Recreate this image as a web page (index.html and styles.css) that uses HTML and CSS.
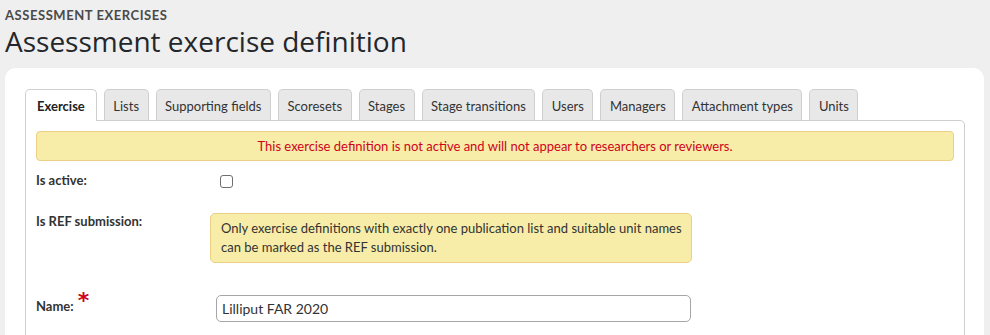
FILE: index.html
```html
<!DOCTYPE html>
<html>
<head>
<meta charset="utf-8">
<link rel="stylesheet" href="styles.css">
</head>
<body>
<div class="page">
  <div class="crumb">ASSESSMENT EXERCISES</div>
  <h1 class="title">Assessment exercise definition</h1>
  <div class="card">
    <ul class="tabs">
      <li class="tab active">Exercise</li>
      <li class="tab">Lists</li>
      <li class="tab">Supporting fields</li>
      <li class="tab">Scoresets</li>
      <li class="tab">Stages</li>
      <li class="tab">Stage transitions</li>
      <li class="tab">Users</li>
      <li class="tab">Managers</li>
      <li class="tab">Attachment types</li>
      <li class="tab">Units</li>
    </ul>
    <div class="panel">
      <div class="alert">This exercise definition is not active and will not appear to researchers or reviewers.</div>
      <div class="row row-active">
        <label class="label">Is active:</label>
        <div class="field"><span class="checkbox"></span></div>
      </div>
      <div class="row row-ref">
        <label class="label">Is REF submission:</label>
        <div class="field"><div class="note">Only exercise definitions with exactly one publication list and suitable unit names can be marked as the REF submission.</div></div>
      </div>
      <div class="row row-name">
        <label class="label">Name:<span class="req">*</span></label>
        <div class="field"><div class="input">Lilliput FAR 2020</div></div>
      </div>
    </div>
  </div>
</div>
</body>
</html>
```
FILE: styles.css
```css
html, body {
  margin: 0;
  padding: 0;
  background: #efefef;
}
body {
  font-family: Lato, "Open Sans", sans-serif;
  color: #333;
  height: 335px;
  overflow: hidden;
}
.page {
  padding: 7px 6px 0 5px;
}
.crumb {
  font-size: 13px;
  font-weight: 700;
  color: #4a4a4a;
  letter-spacing: 0.55px;
  line-height: 16px;
}
.title {
  margin: -1px 0 0 0;
  font-family: "Open Sans", Lato, sans-serif;
  font-weight: 500;
  font-size: 28px;
  line-height: 38px;
  color: #23272b;
}
.card {
  margin-top: 8px;
  background: #fff;
  border-radius: 11px;
  padding: 21px 20px 20px 20px;
  height: 300px;
}
.tabs {
  display: flex;
  list-style: none;
  margin: 0;
  padding: 0;
  gap: 7px;
  position: relative;
  z-index: 1;
}
.tab {
  font-size: 13px;
  height: 31px;
  line-height: 32px;
  padding: 0 8.5px;
  background: #e8e8e8;
  border: 1px solid #cfcfcf;
  border-bottom: none;
  border-radius: 5px 5px 0 0;
  color: #333;
  box-sizing: border-box;
}
.tab.active {
  background: #fff;
  font-weight: 700;
  color: #222;
  height: 32px;
  padding: 0 11px;
}
.panel {
  box-sizing: border-box;
  margin-top: -1px;
  border: 1px solid #cfcfcf;
  border-radius: 0 5px 0 0;
  padding: 10px 10px 0 10px;
  width: 940px;
  height: 230px;
}
.alert {
  background: #f7eda8;
  border: 1px solid #ebd085;
  border-radius: 4px;
  color: #d0021b;
  font-size: 13px;
  text-align: center;
  height: 28px;
  line-height: 29px;
}
.row {
  display: flex;
  font-size: 13px;
}
.label {
  width: 174px;
  font-weight: 700;
  color: #333;
}
.row-active {
  margin-top: 9px;
  height: 20px;
  line-height: 20px;
}
.checkbox {
  display: block;
  width: 11px;
  height: 11px;
  border: 1px solid #6e6e6e;
  border-radius: 3px;
  margin: 5px 0 0 10px;
}
.row-ref {
  margin-top: 23px;
}
.note {
  width: 465px;
  background: #f7eda8;
  border: 1px solid #ebd085;
  border-radius: 5px;
  padding: 5px 5px 5px 10px;
  font-size: 13px;
  line-height: 19px;
  color: #333;
}
.row-name {
  margin-top: 32px;
}
.row-name .label {
  padding-top: 3px;
  line-height: 16px;
}
.req {
  color: #d0021b;
  font-family: "DejaVu Sans", sans-serif;
  font-size: 22px;
  font-weight: 700;
  display: inline-block;
  vertical-align: top;
  line-height: 20px;
  margin: -7px 0 0 4px;
}
.row-name .field {
  padding-left: 6px;
}
.input {
  width: 463px;
  height: 25px;
  border: 1px solid #a6a6a6;
  border-radius: 5px;
  padding: 0 5px;
  line-height: 26px;
  font-size: 14px;
  color: #333;
}
```
